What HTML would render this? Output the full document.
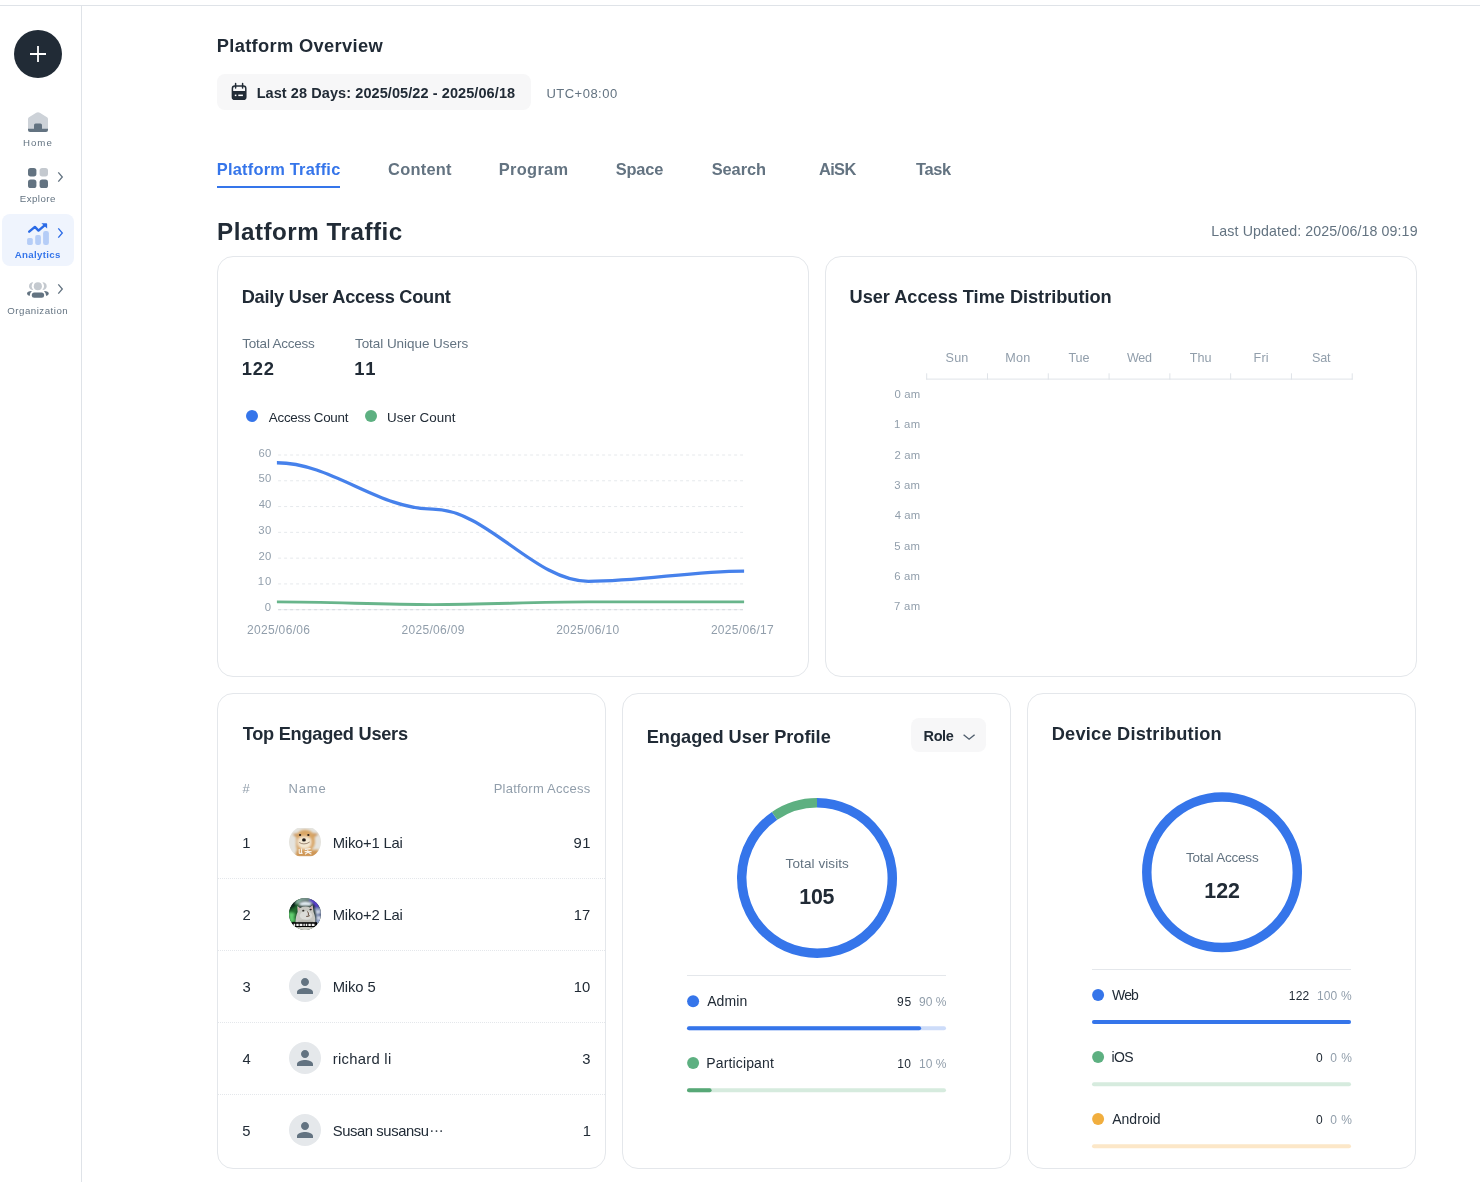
<!DOCTYPE html>
<html lang="en"><head><meta charset="utf-8"><title>Platform Overview</title>
<style>
html,body{margin:0;padding:0;background:#fff;}
body{width:1480px;height:1182px;position:relative;overflow:hidden;font-family:"Liberation Sans",sans-serif;}
.t{position:absolute;white-space:nowrap;line-height:1;margin:0;padding:0;display:block;}
.abs{position:absolute;}
.card{position:absolute;border:1px solid #e4e7eb;border-radius:16px;box-sizing:border-box;background:#fff;}
svg{position:absolute;overflow:visible;}
</style></head>
<body>
<div class="abs" style="left:0px;top:5px;width:1480px;height:1px;background:#dfe3e8;"></div>
<div class="abs" style="left:81px;top:6px;width:1px;height:1176px;background:#dfe3e8;"></div>
<svg width="1480" height="1182" viewBox="0 0 1480 1182" style="left:0;top:0">
<circle cx="38" cy="54" r="24" fill="#212b36"/>
<path d="M30 54H46M38 46V62" stroke="#fff" stroke-width="1.8" fill="none"/>
<path d="M28 119.2Q28 118 29 117.3L36.2 112.8Q38 111.5 39.8 112.8L47 117.3Q48 118 48 119.2V129H28Z" fill="#cdd2d8"/>
<path d="M28 128.8H48V130Q48 132 46 132H30Q28 132 28 130Z" fill="#637381"/>
<path d="M34 130V125.2Q34 123.6 35.6 123.6H40.4Q42 123.6 42 125.2V130Z" fill="#637381"/>
<rect x="28" y="168" width="8.4" height="8.4" rx="2.6" fill="#637381"/>
<rect x="39.6" y="168" width="8.4" height="8.4" rx="2.6" fill="#c4c9cf"/>
<rect x="28" y="179.6" width="8.4" height="8.4" rx="2.6" fill="#637381"/>
<rect x="39.6" y="179.6" width="8.4" height="8.4" rx="2.6" fill="#637381"/>
<path d="M58.3 172.4 L62.3 177 L58.3 181.6" stroke="#637381" stroke-width="1.3" fill="none" stroke-linejoin="miter"/>
<rect x="2" y="214" width="72" height="52" rx="8" fill="#eff4fd"/>
<rect x="27.1" y="238" width="5.7" height="6.9" rx="1.6" fill="#b5cdf7"/>
<rect x="35.2" y="235.1" width="5.7" height="9.8" rx="1.8" fill="#b5cdf7"/>
<rect x="43.1" y="231" width="5.8" height="13.9" rx="2.2" fill="#b5cdf7"/>
<path d="M29.2 231.7L34.9 226.9L38.5 230.6L44.6 225.3" stroke="#2b6be6" stroke-width="2.4" fill="none" stroke-linecap="round" stroke-linejoin="round"/>
<path d="M41.4 223.2H46.4Q47.1 223.2 47.1 223.9V228.6Z" fill="#2b6be6"/>
<path d="M58.3 228.4 L62.3 233 L58.3 237.6" stroke="#2b6be6" stroke-width="1.3" fill="none" stroke-linejoin="miter"/>
<circle cx="37.85" cy="286.2" r="4.05" fill="#c4c9cf"/>
<path d="M33.275 282.32A3.9 3.9 0 1 0 33.275 290.08A6 6 0 0 1 33.275 282.32Z" fill="#c4c9cf"/>
<path d="M42.425 282.32A3.9 3.9 0 1 1 42.425 290.08A6 6 0 0 0 42.425 282.32Z" fill="#c4c9cf"/>
<rect x="31.8" y="292.6" width="12.3" height="5.1" rx="2.5" fill="#637381"/>
<path d="M31.9 291Q27 291.3 27 293.6Q27 295.2 29.6 296Q29.4 293.2 31.9 291Z" fill="#637381"/>
<path d="M43.9 291Q48.8 291.3 48.8 293.6Q48.8 295.2 46.2 296Q46.4 293.2 43.9 291Z" fill="#637381"/>
<path d="M58.3 284.4 L62.3 289 L58.3 293.6" stroke="#637381" stroke-width="1.3" fill="none" stroke-linejoin="miter"/>
<rect x="217" y="74" width="314" height="36" rx="8" fill="#f7f7f8"/>
<rect x="232.4" y="86" width="13.4" height="13.3" rx="2.4" fill="none" stroke="#212b36" stroke-width="1.5"/>
<path d="M232.4 91H245.8V97Q245.8 99.3 243.5 99.3H234.7Q232.4 99.3 232.4 97Z" fill="#212b36"/>
<path d="M235.6 83.6V88M242.6 83.6V88" stroke="#212b36" stroke-width="1.5" stroke-linecap="round"/>
<rect x="234.8" y="94.6" width="1.6" height="1.5" fill="#fff"/><rect x="238.3" y="94.6" width="4.6" height="1.5" fill="#fff"/>
<rect x="217" y="186" width="123" height="2" fill="#3575ea"/>
</svg>
<div class="card" style="left:217px;top:256px;width:592px;height:421px"></div>
<div class="card" style="left:825px;top:256px;width:592px;height:421px"></div>
<div class="card" style="left:217px;top:693px;width:389px;height:476px"></div>
<div class="card" style="left:622px;top:693px;width:389px;height:476px"></div>
<div class="card" style="left:1027px;top:693px;width:389px;height:476px"></div>
<svg width="1480" height="1182" viewBox="0 0 1480 1182" style="left:0;top:0">
<circle cx="252" cy="416" r="6" fill="#3575ea"/>
<circle cx="371" cy="416" r="6" fill="#5db081"/>
<path d="M278.1 455.00 H743" stroke="#e6e9ec" stroke-width="1" stroke-dasharray="3 3" fill="none"/>
<path d="M278.1 480.78 H743" stroke="#e6e9ec" stroke-width="1" stroke-dasharray="3 3" fill="none"/>
<path d="M278.1 506.57 H743" stroke="#e6e9ec" stroke-width="1" stroke-dasharray="3 3" fill="none"/>
<path d="M278.1 532.35 H743" stroke="#e6e9ec" stroke-width="1" stroke-dasharray="3 3" fill="none"/>
<path d="M278.1 558.13 H743" stroke="#e6e9ec" stroke-width="1" stroke-dasharray="3 3" fill="none"/>
<path d="M278.1 583.91 H743" stroke="#e6e9ec" stroke-width="1" stroke-dasharray="3 3" fill="none"/>
<path d="M278 609.7 H743" stroke="#eceef1" stroke-width="1" fill="none"/>
<path d="M278.1 609.7 H743" stroke="#d6dade" stroke-width="1" stroke-dasharray="3 3" fill="none"/>
<path d="M276.90 462.74 C331.43 462.74 378.17 509.15 432.70 509.15 C487.19 509.15 533.90 581.34 588.40 581.34 C642.89 581.34 689.61 571.03 744.10 571.03" stroke="#4681eb" stroke-width="3.3" fill="none" stroke-linejoin="round"/>
<path d="M276.90 601.97 C331.43 601.97 378.17 604.54 432.70 604.54 C487.19 604.54 533.90 601.97 588.40 601.97 C642.89 601.97 689.61 601.97 744.10 601.97" stroke="#68b58b" stroke-width="2.8" fill="none" stroke-linejoin="round"/>
<path d="M926.2 379.1H1352.7" stroke="#dfe3e8" stroke-width="1" fill="none"/>
<path d="M926.70 373.3V379.6" stroke="#dfe3e8" stroke-width="1" fill="none"/>
<path d="M987.49 373.3V379.6" stroke="#dfe3e8" stroke-width="1" fill="none"/>
<path d="M1048.28 373.3V379.6" stroke="#dfe3e8" stroke-width="1" fill="none"/>
<path d="M1109.07 373.3V379.6" stroke="#dfe3e8" stroke-width="1" fill="none"/>
<path d="M1169.86 373.3V379.6" stroke="#dfe3e8" stroke-width="1" fill="none"/>
<path d="M1230.65 373.3V379.6" stroke="#dfe3e8" stroke-width="1" fill="none"/>
<path d="M1291.44 373.3V379.6" stroke="#dfe3e8" stroke-width="1" fill="none"/>
<path d="M1352.23 373.3V379.6" stroke="#dfe3e8" stroke-width="1" fill="none"/>
<path d="M218 878.5 H605" stroke="#e4e7eb" stroke-width="1" stroke-dasharray="1 1" fill="none"/>
<path d="M218 950.5 H605" stroke="#e4e7eb" stroke-width="1" stroke-dasharray="1 1" fill="none"/>
<path d="M218 1022.5 H605" stroke="#e4e7eb" stroke-width="1" stroke-dasharray="1 1" fill="none"/>
<path d="M218 1094.5 H605" stroke="#e4e7eb" stroke-width="1" stroke-dasharray="1 1" fill="none"/>
<defs><clipPath id="av1"><circle cx="305" cy="842" r="16"/></clipPath><clipPath id="av1b"><rect x="288" y="828" width="34" height="28.2"/></clipPath><clipPath id="av2"><circle cx="305" cy="914" r="16"/></clipPath><filter id="bl1" x="-20%" y="-20%" width="140%" height="140%"><feGaussianBlur stdDeviation="1"/></filter><filter id="bl2" x="-20%" y="-20%" width="140%" height="140%"><feGaussianBlur stdDeviation="0.7"/></filter><filter id="bl3" x="-20%" y="-20%" width="140%" height="140%"><feGaussianBlur stdDeviation="0.35"/></filter></defs>
<g clip-path="url(#av1)"><g clip-path="url(#av1b)"><rect x="289" y="828" width="32" height="28.2" fill="#e5e4df"/><g filter="url(#bl1)"><path d="M292.6 834.2Q296 833 299 833.6L298 838Q295 836.6 292.6 834.2Z" fill="#c9935a"/><path d="M318.4 834Q315 832.8 311.6 833.4L312.6 838Q316 836.4 318.4 834Z" fill="#c9935a"/><path d="M296.2 840Q296 830 305 829.8Q314.6 830 314.8 840Q315.6 846 311 850L318.6 849.5L319 857H294.5L297 850Q295.6 846 296.2 840Z" fill="#d8a565"/><path d="M297.6 842Q297.5 837.5 301 837Q303 836.4 304.2 834.5Q305.6 836.4 307.6 837Q311.6 837.5 311.4 842Q311.6 848 304.5 849Q297.4 848 297.6 842Z" fill="#f4e8d2"/><path d="M299.5 834.6Q304.5 831.5 309.5 834.6L306 836.4H303Z" fill="#dba868"/><path d="M296.5 851H312Q317 850 318.8 853.5V857H296Z" fill="#cf9757"/></g><g filter="url(#bl3)"><ellipse cx="303.95" cy="839.9" rx="1.9" ry="1.7" fill="#1c1715"/><ellipse cx="300.05" cy="835.1" rx="1.15" ry="1" fill="#2c211b"/><ellipse cx="308.35" cy="835.1" rx="1.15" ry="1" fill="#2c211b"/><path d="M299.2 842.4Q301.5 844 303.9 843.9Q307 844 309.7 842" stroke="#6b5040" stroke-width="0.8" fill="none" opacity=".8"/><path d="M299.2 849V853.6M301.5 848.4V853.8M299.2 853.4H302.6M305 849.4L310.6 848.6M304.6 851.6H311.6M307.8 848.4V852.4L305 854.2M308 852.2L311.4 854.2" stroke="#f7f2ea" stroke-width="1.1" fill="none"/></g></g></g>
<g clip-path="url(#av2)"><rect x="289" y="898" width="32" height="32" fill="#1a2a22"/><g filter="url(#bl1)"><path d="M287 906Q292 898 300 897L299 905Q296 914 297 923H287Z" fill="#23702f"/><path d="M288.5 913Q292 911.5 295 914Q292.5 917 295 921L290 922.5Z" fill="#62d070"/><path d="M289 903Q292 899.5 297 900L295.5 907Q292 908 289 911Z" fill="#10281a"/><path d="M296 902Q305 894 315 901Q310 899 305 899.5Q300 900 296 904Z" fill="#bfeadf"/><path d="M299 903Q305 899 312 903L311 906H300Z" fill="#dfe9f0"/><path d="M310 898Q319 900 322 910L316 909Q314 903 309 901Z" fill="#5a3fd2"/><path d="M314 908H322V924H315Q317 916 314 908Z" fill="#8f9fc4"/><path d="M316 911h4v2h-4zM317 917h4v2h-4z" fill="#e6eef8"/><path d="M318 905h3v3h-3zM319 913h2v3h-2z" fill="#27306a"/></g><g filter="url(#bl2)"><path d="M297.3 906L300 908Q305 905.5 310 907.4L312.6 905.2L313.6 912Q316 918 315 923L305 931L295.5 923Q295.6 916 297.6 912Z" fill="#c8c8c2"/><path d="M298 907L300.2 908.6L298.8 911.6Z" fill="#d9a9a6"/><path d="M312.2 906L310.2 907.8L312.6 910.6Z" fill="#d9a9a6"/><ellipse cx="306" cy="915.5" rx="6.3" ry="4.4" fill="#dcdcd8"/><path d="M298 921Q305 918.5 313 921V923H298Z" fill="#b9b9b2"/></g><g filter="url(#bl3)"><ellipse cx="303.3" cy="910.7" rx="1.1" ry="0.9" fill="#2e2a25"/><ellipse cx="310.6" cy="909.6" rx="1.2" ry="0.8" fill="#2e2a25"/><path d="M307.4 911.4L308.4 913V915.6M306.2 916.4Q308.4 916.6 309.8 915.6" stroke="#5a4030" stroke-width="0.9" fill="none"/><rect x="292" y="922.2" width="25" height="5" fill="#050505"/><path d="M293.6 924.8H315.6" stroke="#f2f2f2" stroke-width="2.2" stroke-dasharray="1.6 1.1 2.4 0.9 2.8 1 1.4 .9"/><path d="M291 927.2H319V931H291Z" fill="#d2d2ca"/></g></g>
<circle cx="305" cy="986" r="16" fill="#e5e8eb"/>
<path transform="translate(293 974)" d="M12 12c2.21 0 4-1.79 4-4s-1.79-4-4-4-4 1.79-4 4 1.79 4 4 4zm0 2c-2.67 0-8 1.34-8 4v2h16v-2c0-2.66-5.33-4-8-4z" fill="#637381"/>
<circle cx="305" cy="1058" r="16" fill="#e5e8eb"/>
<path transform="translate(293 1046)" d="M12 12c2.21 0 4-1.79 4-4s-1.79-4-4-4-4 1.79-4 4 1.79 4 4 4zm0 2c-2.67 0-8 1.34-8 4v2h16v-2c0-2.66-5.33-4-8-4z" fill="#637381"/>
<circle cx="305" cy="1130" r="16" fill="#e5e8eb"/>
<path transform="translate(293 1118)" d="M12 12c2.21 0 4-1.79 4-4s-1.79-4-4-4-4 1.79-4 4 1.79 4 4 4zm0 2c-2.67 0-8 1.34-8 4v2h16v-2c0-2.66-5.33-4-8-4z" fill="#637381"/>
<rect x="911.1" y="718" width="75" height="34" rx="8" fill="#f7f7f8"/>
<path d="M963.6 734.7L969.1 739.2L974.6 734.7" stroke="#4f5d6c" stroke-width="1.4" fill="none"/>
<path d="M817.000 802.730 A75.27 75.27 0 1 1 774.599 815.809" stroke="#3575ea" stroke-width="9.46" fill="none"/>
<path d="M774.599 815.809 A75.27 75.27 0 0 1 817.000 802.730" stroke="#5db081" stroke-width="9.46" fill="none"/>
<circle cx="1222.05" cy="872.3" r="75.27" stroke="#3575ea" stroke-width="9.46" fill="none"/>
<path d="M687 975.5H946" stroke="#e4e7eb" stroke-width="1"/>
<path d="M1092 969.5H1351" stroke="#e4e7eb" stroke-width="1"/>
<circle cx="693.1" cy="1001.2" r="6" fill="#3575ea"/>
<rect x="687" y="1026.2" width="259" height="4" rx="2" fill="#cddcf9"/>
<rect x="687" y="1026.2" width="234.136" height="4" rx="2" fill="#3575ea"/>
<circle cx="693.1" cy="1063.1" r="6" fill="#5db081"/>
<rect x="687" y="1088.2" width="259" height="4" rx="2" fill="#d6ebde"/>
<rect x="687" y="1088.2" width="24.605" height="4" rx="2" fill="#57a877"/>
<circle cx="1098.1" cy="995" r="6" fill="#3575ea"/>
<rect x="1092" y="1020.1" width="259" height="4" rx="2" fill="#cddcf9"/>
<rect x="1092" y="1020.1" width="259" height="4" rx="2" fill="#3575ea"/>
<circle cx="1098.1" cy="1056.9" r="6" fill="#5db081"/>
<rect x="1092" y="1082.2" width="259" height="4" rx="2" fill="#d6ebde"/>
<circle cx="1098.1" cy="1119" r="6" fill="#f1ae3e"/>
<rect x="1092" y="1144.2" width="259" height="4" rx="2" fill="#fce7c8"/>
</svg><div id="txt" style="position:absolute;left:0;top:0;width:1480px;height:1182px;will-change:transform"><aside class="g-sidebar">
<span id="t0" class="t" style="left:22.91px;top:138px;font-size:9.70px;font-weight:400;color:#637381;letter-spacing:1.008px">Home</span>
<span id="t1" class="t" style="left:19.71px;top:194px;font-size:9.70px;font-weight:400;color:#637381;letter-spacing:0.485px">Explore</span>
<span id="t2" class="t" style="left:14.67px;top:250px;font-size:9.70px;font-weight:700;color:#3575ea;letter-spacing:0.320px">Analytics</span>
<span id="t3" class="t" style="left:7.27px;top:306px;font-size:9.70px;font-weight:400;color:#637381;letter-spacing:0.496px">Organization</span>
</aside>
<header class="g-header">
<h1 id="t4" class="t" style="left:216.73px;top:37px;font-size:18.30px;font-weight:700;color:#212b36;letter-spacing:0.335px">Platform Overview</h1>
<span id="t5" class="t" style="left:256.63px;top:86px;font-size:14.50px;font-weight:700;color:#212b36;letter-spacing:0.081px">Last 28 Days: 2025/05/22 - 2025/06/18</span>
<span id="t6" class="t" style="left:546.48px;top:87px;font-size:13.00px;font-weight:400;color:#637381;letter-spacing:0.477px">UTC+08:00</span>
</header>
<nav class="g-tabs">
<span id="t7" class="t" style="left:216.85px;top:161px;font-size:16.40px;font-weight:700;color:#3575ea;letter-spacing:0.212px">Platform Traffic</span>
<span id="t8" class="t" style="left:388.10px;top:161px;font-size:16.40px;font-weight:700;color:#637381;letter-spacing:0.259px">Content</span>
<span id="t9" class="t" style="left:498.85px;top:161px;font-size:16.40px;font-weight:700;color:#637381;letter-spacing:0.306px">Program</span>
<span id="t10" class="t" style="left:615.87px;top:161px;font-size:16.40px;font-weight:700;color:#637381;letter-spacing:-0.215px">Space</span>
<span id="t11" class="t" style="left:711.73px;top:161px;font-size:16.40px;font-weight:700;color:#637381;letter-spacing:-0.078px">Search</span>
<span id="t12" class="t" style="left:818.97px;top:161px;font-size:16.40px;font-weight:700;color:#637381;letter-spacing:-0.638px">AiSK</span>
<span id="t13" class="t" style="left:916.00px;top:161px;font-size:16.40px;font-weight:700;color:#637381;letter-spacing:-0.335px">Task</span>
</nav>
<div class="g-heading">
<h2 id="t14" class="t" style="left:217.03px;top:220px;font-size:24.20px;font-weight:700;color:#212b36;letter-spacing:0.525px">Platform Traffic</h2>
<span id="t15" class="t" style="left:1211.32px;top:224px;font-size:14.20px;font-weight:400;color:#637381;letter-spacing:0.120px">Last Updated: 2025/06/18 09:19</span>
</div>
<section class="g-card-daily">
<h3 id="t16" class="t" style="left:241.73px;top:288px;font-size:18.20px;font-weight:700;color:#212b36;letter-spacing:-0.249px">Daily User Access Count</h3>
<span id="t17" class="t" style="left:242.32px;top:337px;font-size:13.50px;font-weight:400;color:#637381;letter-spacing:-0.237px">Total Access</span>
<span id="t18" class="t" style="left:354.94px;top:337px;font-size:13.50px;font-weight:400;color:#637381;letter-spacing:-0.047px">Total Unique Users</span>
<span id="t19" class="t" style="left:241.70px;top:360px;font-size:18.40px;font-weight:700;color:#212b36;letter-spacing:0.811px">122</span>
<span id="t20" class="t" style="left:354.25px;top:360px;font-size:18.40px;font-weight:700;color:#212b36;letter-spacing:1.906px">11</span>
<span id="t21" class="t" style="left:268.87px;top:411px;font-size:13.40px;font-weight:400;color:#212b36;letter-spacing:-0.283px">Access Count</span>
<span id="t22" class="t" style="left:387.11px;top:411px;font-size:13.40px;font-weight:400;color:#212b36;letter-spacing:0.070px">User Count</span>
<span id="t23" class="t" style="left:258.44px;top:448px;font-size:11.30px;font-weight:400;color:#919eab;letter-spacing:0.282px">60</span>
<span id="t24" class="t" style="left:258.42px;top:473px;font-size:11.30px;font-weight:400;color:#919eab;letter-spacing:0.306px">50</span>
<span id="t25" class="t" style="left:258.68px;top:499px;font-size:11.30px;font-weight:400;color:#919eab;letter-spacing:0.047px">40</span>
<span id="t26" class="t" style="left:258.33px;top:525px;font-size:11.30px;font-weight:400;color:#919eab;letter-spacing:0.388px">30</span>
<span id="t27" class="t" style="left:258.59px;top:551px;font-size:11.30px;font-weight:400;color:#919eab;letter-spacing:0.133px">20</span>
<span id="t28" class="t" style="left:257.74px;top:576px;font-size:11.30px;font-weight:400;color:#919eab;letter-spacing:0.980px">10</span>
<span id="t29" class="t" style="left:264.77px;top:602px;font-size:11.30px;font-weight:400;color:#919eab;letter-spacing:0.000px">0</span>
<span id="t30" class="t" style="left:246.91px;top:624px;font-size:12.00px;font-weight:400;color:#919eab;letter-spacing:0.336px">2025/06/06</span>
<span id="t31" class="t" style="left:401.44px;top:624px;font-size:12.00px;font-weight:400;color:#919eab;letter-spacing:0.319px">2025/06/09</span>
<span id="t32" class="t" style="left:556.14px;top:624px;font-size:12.00px;font-weight:400;color:#919eab;letter-spacing:0.319px">2025/06/10</span>
<span id="t33" class="t" style="left:710.89px;top:624px;font-size:12.00px;font-weight:400;color:#919eab;letter-spacing:0.304px">2025/06/17</span>
</section>
<section class="g-card-time">
<h3 id="t34" class="t" style="left:849.57px;top:288px;font-size:18.20px;font-weight:700;color:#212b36;letter-spacing:-0.025px">User Access Time Distribution</h3>
<span id="t35" class="t" style="left:945.61px;top:352px;font-size:12.60px;font-weight:400;color:#919eab;letter-spacing:0.177px">Sun</span>
<span id="t36" class="t" style="left:1005.16px;top:352px;font-size:12.60px;font-weight:400;color:#919eab;letter-spacing:0.321px">Mon</span>
<span id="t37" class="t" style="left:1068.40px;top:352px;font-size:12.60px;font-weight:400;color:#919eab;letter-spacing:-0.102px">Tue</span>
<span id="t38" class="t" style="left:1126.90px;top:352px;font-size:12.60px;font-weight:400;color:#919eab;letter-spacing:-0.295px">Wed</span>
<span id="t39" class="t" style="left:1189.87px;top:352px;font-size:12.60px;font-weight:400;color:#919eab;letter-spacing:-0.060px">Thu</span>
<span id="t40" class="t" style="left:1253.57px;top:352px;font-size:12.60px;font-weight:400;color:#919eab;letter-spacing:0.137px">Fri</span>
<span id="t41" class="t" style="left:1312.02px;top:352px;font-size:12.60px;font-weight:400;color:#919eab;letter-spacing:-0.149px">Sat</span>
<span id="t42" class="t" style="left:894.38px;top:389px;font-size:11.30px;font-weight:400;color:#919eab;letter-spacing:0.186px">0 am</span>
<span id="t43" class="t" style="left:893.98px;top:419px;font-size:11.30px;font-weight:400;color:#919eab;letter-spacing:0.320px">1 am</span>
<span id="t44" class="t" style="left:894.46px;top:450px;font-size:11.30px;font-weight:400;color:#919eab;letter-spacing:0.159px">2 am</span>
<span id="t45" class="t" style="left:894.20px;top:480px;font-size:11.30px;font-weight:400;color:#919eab;letter-spacing:0.244px">3 am</span>
<span id="t46" class="t" style="left:894.72px;top:510px;font-size:11.30px;font-weight:400;color:#919eab;letter-spacing:0.073px">4 am</span>
<span id="t47" class="t" style="left:894.17px;top:541px;font-size:11.30px;font-weight:400;color:#919eab;letter-spacing:0.214px">5 am</span>
<span id="t48" class="t" style="left:894.16px;top:571px;font-size:11.30px;font-weight:400;color:#919eab;letter-spacing:0.223px">6 am</span>
<span id="t49" class="t" style="left:894.08px;top:601px;font-size:11.30px;font-weight:400;color:#919eab;letter-spacing:0.286px">7 am</span>
</section>
<section class="g-card-users">
<h3 id="t50" class="t" style="left:242.66px;top:725px;font-size:18.20px;font-weight:700;color:#212b36;letter-spacing:-0.253px">Top Engaged Users</h3>
<span id="t51" class="t" style="left:242.50px;top:782px;font-size:13.00px;font-weight:400;color:#919eab;letter-spacing:0.000px">#</span>
<span id="t52" class="t" style="left:288.60px;top:782px;font-size:13.00px;font-weight:400;color:#919eab;letter-spacing:0.793px">Name</span>
<span id="t53" class="t" style="left:493.64px;top:782px;font-size:13.00px;font-weight:400;color:#919eab;letter-spacing:0.241px">Platform Access</span>
<span id="t54" class="t" style="left:242.18px;top:836px;font-size:14.80px;font-weight:400;color:#212b36;letter-spacing:0.000px">1</span>
<span id="t55" class="t" style="left:332.67px;top:836px;font-size:14.80px;font-weight:400;color:#212b36;letter-spacing:-0.197px">Miko+1 Lai</span>
<span id="t56" class="t" style="left:573.46px;top:836px;font-size:14.80px;font-weight:400;color:#212b36;letter-spacing:0.490px">91</span>
<span id="t57" class="t" style="left:242.38px;top:908px;font-size:14.80px;font-weight:400;color:#212b36;letter-spacing:0.000px">2</span>
<span id="t58" class="t" style="left:332.67px;top:908px;font-size:14.80px;font-weight:400;color:#212b36;letter-spacing:-0.197px">Miko+2 Lai</span>
<span id="t59" class="t" style="left:573.75px;top:908px;font-size:14.80px;font-weight:400;color:#212b36;letter-spacing:0.141px">17</span>
<span id="t60" class="t" style="left:242.40px;top:980px;font-size:14.80px;font-weight:400;color:#212b36;letter-spacing:0.000px">3</span>
<span id="t61" class="t" style="left:332.67px;top:980px;font-size:14.80px;font-weight:400;color:#212b36;letter-spacing:-0.122px">Miko 5</span>
<span id="t62" class="t" style="left:573.80px;top:980px;font-size:14.80px;font-weight:400;color:#212b36;letter-spacing:0.008px">10</span>
<span id="t63" class="t" style="left:242.40px;top:1052px;font-size:14.80px;font-weight:400;color:#212b36;letter-spacing:0.000px">4</span>
<span id="t64" class="t" style="left:332.86px;top:1052px;font-size:14.80px;font-weight:400;color:#212b36;letter-spacing:0.271px">richard li</span>
<span id="t65" class="t" style="left:582.15px;top:1052px;font-size:14.80px;font-weight:400;color:#212b36;letter-spacing:0.000px">3</span>
<span id="t66" class="t" style="left:242.18px;top:1124px;font-size:14.80px;font-weight:400;color:#212b36;letter-spacing:0.000px">5</span>
<span id="t67" class="t" style="left:332.70px;top:1124px;font-size:14.80px;font-weight:400;color:#212b36;letter-spacing:-0.399px">Susan susansu</span><span class="t" lang="zh-CN" style="left:429.40px;top:1122.60px;font-size:14px;color:#212b36;font-family:'Noto Sans CJK SC',sans-serif">…</span>
<span id="t68" class="t" style="left:582.66px;top:1124px;font-size:14.80px;font-weight:400;color:#212b36;letter-spacing:0.000px">1</span>
</section>
<section class="g-card-profile">
<h3 id="t69" class="t" style="left:646.73px;top:728px;font-size:18.20px;font-weight:700;color:#212b36;letter-spacing:0.006px">Engaged User Profile</h3>
<span id="t70" class="t" style="left:923.62px;top:729px;font-size:14.50px;font-weight:700;color:#212b36;letter-spacing:-0.408px">Role</span>
<span id="t71" class="t" style="left:785.62px;top:857px;font-size:13.50px;font-weight:400;color:#637381;letter-spacing:0.090px">Total visits</span>
<span id="t72" class="t" style="left:799.33px;top:887px;font-size:21.40px;font-weight:700;color:#212b36;letter-spacing:-0.265px">105</span>
<span id="t73" class="t" style="left:707.15px;top:994px;font-size:14.00px;font-weight:400;color:#212b36;letter-spacing:0.106px">Admin</span>
<span id="t74" class="t" style="left:896.95px;top:996px;font-size:12.00px;font-weight:400;color:#212b36;letter-spacing:0.851px">95</span>
<span id="t75" class="t" style="left:919.12px;top:996px;font-size:12.00px;font-weight:400;color:#919eab;letter-spacing:-0.037px">90 %</span>
<span id="t76" class="t" style="left:706.32px;top:1056px;font-size:14.00px;font-weight:400;color:#212b36;letter-spacing:0.135px">Participant</span>
<span id="t77" class="t" style="left:897.21px;top:1058px;font-size:12.00px;font-weight:400;color:#212b36;letter-spacing:0.396px">10</span>
<span id="t78" class="t" style="left:918.96px;top:1058px;font-size:12.00px;font-weight:400;color:#919eab;letter-spacing:0.016px">10 %</span>
</section>
<section class="g-card-device">
<h3 id="t79" class="t" style="left:1051.73px;top:725px;font-size:18.20px;font-weight:700;color:#212b36;letter-spacing:0.232px">Device Distribution</h3>
<span id="t80" class="t" style="left:1185.88px;top:851px;font-size:13.50px;font-weight:400;color:#637381;letter-spacing:-0.207px">Total Access</span>
<span id="t81" class="t" style="left:1204.33px;top:881px;font-size:21.40px;font-weight:700;color:#212b36;letter-spacing:-0.008px">122</span>
<span id="t82" class="t" style="left:1112.06px;top:988px;font-size:14.00px;font-weight:400;color:#212b36;letter-spacing:-0.843px">Web</span>
<span id="t83" class="t" style="left:1288.86px;top:990px;font-size:12.00px;font-weight:400;color:#212b36;letter-spacing:0.157px">122</span>
<span id="t84" class="t" style="left:1317.00px;top:990px;font-size:12.00px;font-weight:400;color:#919eab;letter-spacing:0.134px">100 %</span>
<span id="t85" class="t" style="left:1111.55px;top:1050px;font-size:14.00px;font-weight:400;color:#212b36;letter-spacing:-0.710px">iOS</span>
<span id="t86" class="t" style="left:1315.98px;top:1052px;font-size:12.00px;font-weight:400;color:#212b36;letter-spacing:0.000px">0</span>
<span id="t87" class="t" style="left:1330.36px;top:1052px;font-size:12.00px;font-weight:400;color:#919eab;letter-spacing:0.390px">0 %</span>
<span id="t88" class="t" style="left:1112.15px;top:1112px;font-size:14.00px;font-weight:400;color:#212b36;letter-spacing:0.043px">Android</span>
<span id="t89" class="t" style="left:1315.98px;top:1114px;font-size:12.00px;font-weight:400;color:#212b36;letter-spacing:0.000px">0</span>
<span id="t90" class="t" style="left:1330.36px;top:1114px;font-size:12.00px;font-weight:400;color:#919eab;letter-spacing:0.390px">0 %</span>
</section></div>
</body></html>
